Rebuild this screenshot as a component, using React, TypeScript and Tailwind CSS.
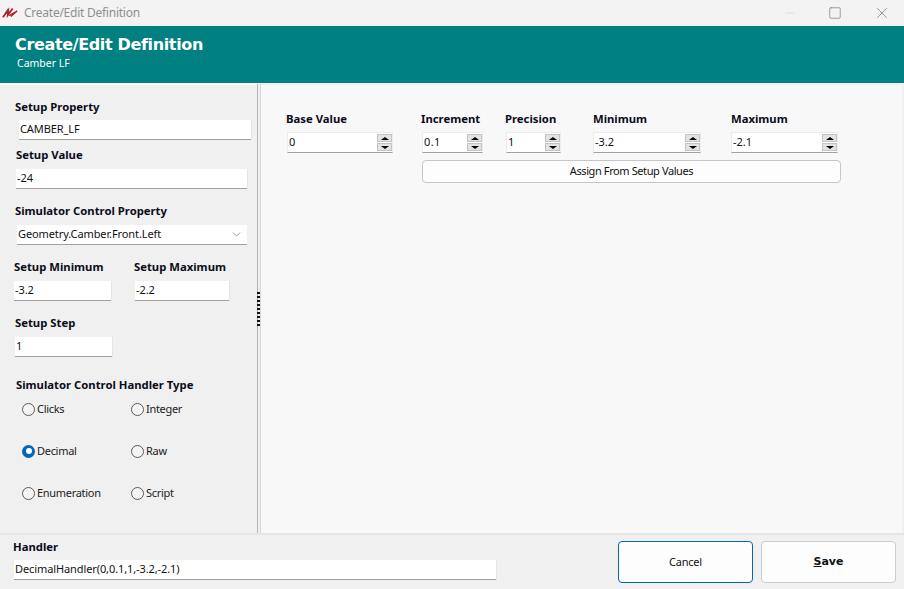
import React from 'react';
import { ChevronDown, Minus, Square, X } from 'lucide-react';

const bodyFont = "font-['Noto_Sans',sans-serif]";
const labelFont = "font-['Noto_Sans',sans-serif]";

const Label = ({ text, className = '' }: { text: string; className?: string }) => (
  <div className={`${labelFont} text-[11.3px] leading-[14px] font-bold text-[#0b0b1a] whitespace-nowrap ${className}`}>{text}</div>
);

const Field = ({ value, className = '' }: { value: string; className?: string }) => (
  <div className={`h-[20px] bg-white border-b border-[#a0a0a0] shadow-[1px_0_0_#e4e4e4] pl-[1px] flex items-center text-[11px] tracking-[-0.1px] text-[#111] ${bodyFont} ${className}`}>
    {value}
  </div>
);

const Spinner = ({ value, className = '' }: { value: string; className?: string }) => (
  <div className={`h-[21px] bg-white border border-[#ececec] border-b-[#a0a0a0] pl-[1px] flex items-center justify-between text-[11px] text-[#111] ${bodyFont} ${className}`}>
    <span>{value}</span>
    <div className="flex flex-col gap-[1px]">
      <div className="w-[15px] h-[8px] bg-[#e3e3e3] border border-[#c4c4c4] flex items-center justify-center">
        <div className="w-0 h-0 border-l-[4px] border-r-[4px] border-b-[3px] border-l-transparent border-r-transparent border-b-black" />
      </div>
      <div className="w-[15px] h-[8px] bg-[#e3e3e3] border border-[#c4c4c4] flex items-center justify-center">
        <div className="w-0 h-0 border-l-[4px] border-r-[4px] border-t-[3px] border-l-transparent border-r-transparent border-t-black" />
      </div>
    </div>
  </div>
);

const Radio = ({ label, checked = false, className = '' }: { label: string; checked?: boolean; className?: string }) => (
  <div className={`flex items-center h-[14px] text-[11px] tracking-[-0.3px] text-[#222] ${bodyFont} ${className}`}>
    {checked ? (
      <div className="w-[13px] h-[13px] rounded-full bg-[#0067c0] flex items-center justify-center shrink-0">
        <div className="w-[6px] h-[6px] rounded-full bg-white" />
      </div>
    ) : (
      <div className="w-[13px] h-[13px] rounded-full border border-[#5a5a5a] bg-[#f4f4f4] shrink-0" />
    )}
    <span className="ml-[2px]">{label}</span>
  </div>
);

const App: React.FC = () => {
  return (
    <div className="w-[904px] h-[589px] overflow-hidden flex flex-col bg-[#f0f0f0]">
      {/* Title bar */}
      <div className="h-[26px] bg-[#f3f3f3] flex items-center shrink-0">
        <svg viewBox="0 0 18 14" className="w-[16px] h-[14px] ml-[2px] -mt-[2px]">
          <path d="M1 13 L7 5 L6.5 10.5 L12 3" stroke="#b3202a" strokeWidth="2" fill="none" />
          <path d="M8 11 L17 6 L10 12" stroke="#b3202a" strokeWidth="1.5" fill="none" />
          <path d="M3 9 L7 3" stroke="#555" strokeWidth="1" fill="none" />
        </svg>
        <span className={`ml-[6px] text-[12px] tracking-[-0.25px] text-[#8f8f8f] ${bodyFont}`}>Create/Edit Definition</span>
        <div className="ml-auto flex items-center text-[#7a7a7a]">
          <Minus size={14} strokeWidth={1} className="text-[#d2d2d2] mr-[31px]" />
          <Square size={14} strokeWidth={1.2} className="mr-[31px]" />
          <X size={18} strokeWidth={1} className="mr-[13px]" />
        </div>
      </div>

      {/* Header */}
      <div className="h-[57px] bg-[#008080] shrink-0 pl-[15px] pt-[9px] text-white">
        <div className="font-['DejaVu_Sans',sans-serif] text-[16px] leading-[20px] font-bold tracking-[-0.35px]">Create/Edit Definition</div>
        <div className={`${bodyFont} text-[10.5px] leading-[14px] mt-[1px] ml-[2px]`}>Camber LF</div>
      </div>

      {/* Body */}
      <div className="h-[449px] mt-[1px] bg-white flex shrink-0">
        <div className="w-[257px] bg-[#f0f0f0] pt-[15px] shrink-0 border-t border-white">
          <Label text="Setup Property" className="ml-[15px]" />
          <Field value="CAMBER_LF" className="ml-[19px] w-[232px] mt-[6px]" />
          <Label text="Setup Value" className="ml-[16px] mt-[8px]" />
          <Field value="-24" className="ml-[16px] w-[231px] mt-[7px]" />
          <Label text="Simulator Control Property" className="ml-[15px] mt-[15px]" />
          <div className={`ml-[17px] w-[230px] h-[20px] mt-[7px] bg-white border-b border-[#a0a0a0] flex items-center justify-between pl-[1px] pr-[4px] text-[11px] tracking-[-0.1px] text-[#111] ${bodyFont}`}>
            <span>Geometry.Camber.Front.Left</span>
            <ChevronDown size={13} strokeWidth={1} className="text-[#444]" />
          </div>
          <div className="flex mt-[15px]">
            <div className="ml-[14px] w-[97px]">
              <Label text="Setup Minimum" />
              <Field value="-3.2" className="mt-[7px]" />
            </div>
            <div className="ml-[24px] w-[94px]">
              <Label text="Setup Maximum" className="-ml-[1px]" />
              <Field value="-2.2" className="mt-[7px]" />
            </div>
          </div>
          <Label text="Setup Step" className="ml-[15px] mt-[15px]" />
          <Field value="1" className="ml-[15px] w-[97px] mt-[7px]" />
          <Label text="Simulator Control Handler Type" className="ml-[16px] mt-[21px]" />
          <div className="ml-[22px] mt-[10px] grid grid-cols-[109px_auto] gap-y-[28px]">
            <Radio label="Clicks" />
            <Radio label="Integer" />
            <Radio label="Decimal" checked />
            <Radio label="Raw" />
            <Radio label="Enumeration" />
            <Radio label="Script" />
          </div>
        </div>

        {/* Splitter */}
        <div className="w-[4px] bg-[#f0f0f0] flex items-center shrink-0 border-l border-[#b4b4b4] border-r border-r-[#d8d8d8]">
          <div className="flex flex-col gap-[2px] -ml-[1px]">
            {[...Array(9)].map((_, i) => (
              <div key={i} className="w-[3px] h-[2px] bg-[#111]" />
            ))}
          </div>
        </div>

        <div className="w-[641px] h-[449px] bg-[#f8f8f8] border-t border-[#eeeeee] pt-[27px] shrink-0">
          <div className="flex">
            <div className="ml-[25px] w-[107px]">
              <Label text="Base Value" />
              <Spinner value="0" className="mt-[6px] ml-[1px]" />
            </div>
            <div className="ml-[28px] w-[62px]">
              <Label text="Increment" />
              <Spinner value="0.1" className="mt-[6px] ml-[1px] tracking-[0.4px]" />
            </div>
            <div className="ml-[22px] w-[56px]">
              <Label text="Precision" />
              <Spinner value="1" className="mt-[6px] ml-[1px]" />
            </div>
            <div className="ml-[32px] w-[108px]">
              <Label text="Minimum" />
              <Spinner value="-3.2" className="mt-[6px]" />
            </div>
            <div className="ml-[30px] w-[107px]">
              <Label text="Maximum" />
              <Spinner value="-2.1" className="mt-[6px]" />
            </div>
          </div>
          <button className={`block ml-[161px] mt-[7px] w-[419px] h-[23px] bg-[#fdfdfd] border border-[#c6c6c6] rounded-[4px] text-[11px] tracking-[-0.4px] text-[#111] ${bodyFont}`}>
            Assign From Setup Values
          </button>
        </div>
        <div className="flex-1 bg-[#f0f0f0]" />
      </div>

      {/* Footer */}
      <div className="flex-1 bg-[#f0f0f0] border-t-2 border-[#e6e6e6] flex pt-[5px]">
        <div className="ml-[13px]">
          <Label text="Handler" />
          <Field value="DecimalHandler(0,0.1,1,-3.2,-2.1)" className="ml-[1px] mt-[6px] w-[482px]" />
        </div>
        <button className={`ml-[122px] w-[135px] h-[42px] mt-[1px] bg-[#fdfdfd] border border-[#0067c0] rounded-[4px] text-[11px] tracking-[-0.2px] text-[#111] ${bodyFont}`}>
          Cancel
        </button>
        <button className="ml-[8px] w-[135px] h-[42px] mt-[1px] bg-[#fdfdfd] border border-[#cccccc] rounded-[4px] text-[11px] font-bold text-[#111] font-['DejaVu_Sans',sans-serif]">
          <span className="underline">S</span>ave
        </button>
      </div>
    </div>
  );
};

export default App;
